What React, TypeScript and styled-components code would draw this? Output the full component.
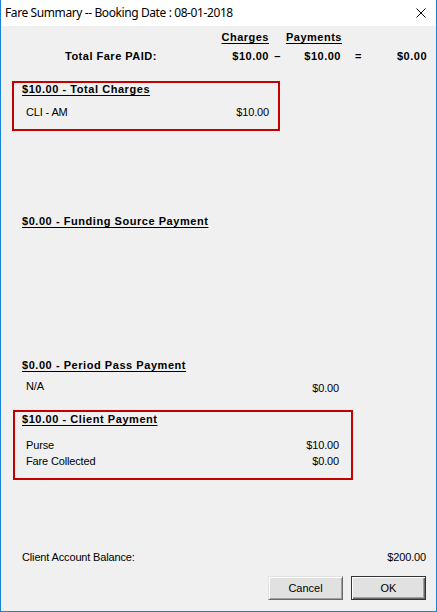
import React from "react";
import styled, { createGlobalStyle } from "styled-components";

const GlobalStyle = createGlobalStyle`
  html, body {
    margin: 0;
    padding: 0;
    background: #f0f0f0;
  }
  * { box-sizing: border-box; }
`;

const Window = styled.div`
  width: 437px;
  height: 612px;
  display: flex;
  flex-direction: column;
  border: 1px solid #1883d7;
  border-top: none;
  background: #f0f0f0;
  font-family: "Liberation Sans", Arial, sans-serif;
  font-size: 11px;
  color: #000;
`;

const TitleBar = styled.div`
  height: 26px;
  flex: none;
  display: flex;
  align-items: center;
  justify-content: space-between;
  padding: 0 10px 0 4px;
  background: #fff;
`;

const TitleText = styled.span`
  font-family: "Noto Sans", "Open Sans", sans-serif;
  font-size: 12px;
  letter-spacing: -0.4px;
  line-height: 26px;
  color: #000;
`;

const CloseGlyph = styled.svg`
  display: block;
  width: 10px;
  height: 10px;
  margin-top: -1px;
`;

const Body = styled.div`
  flex: 1;
  display: flex;
  flex-direction: column;
  align-items: flex-start;
  padding: 5px 9px 0 11px;
`;

const Totals = styled.div`
  margin-left: 53px;
  display: grid;
  grid-template-columns: 150px 54px 17px 55px 35px 51px;
  row-gap: 6px;
  line-height: 13px;
  font-weight: bold;
  letter-spacing: 0.5px;
`;

const Cell = styled.span<{ $align?: "left" | "right" | "center"; $under?: boolean }>`
  text-align: ${(p) => p.$align ?? "left"};
  text-decoration: ${(p) => (p.$under ? "underline" : "none")};
  text-underline-offset: 2px;
  white-space: nowrap;
`;

const Section = styled.div<{
  $top: number;
  $width: number;
  $left?: number;
  $framed?: boolean;
  $padTop?: number;
  $padBottom?: number;
}>`
  margin-top: ${(p) => p.$top}px;
  margin-left: ${(p) => p.$left ?? 0}px;
  width: ${(p) => p.$width}px;
  display: flex;
  flex-direction: column;
  border: ${(p) => (p.$framed ? "2px solid #c40000" : "none")};
  padding-top: ${(p) => p.$padTop ?? 0}px;
  padding-bottom: ${(p) => p.$padBottom ?? 0}px;
`;

const Heading = styled.div<{ $indent: number }>`
  padding-left: ${(p) => p.$indent}px;
  line-height: 13px;
  font-weight: bold;
  letter-spacing: 0.55px;
  text-decoration: underline;
  text-underline-offset: 2px;
  white-space: nowrap;
`;

const Lines = styled.div<{ $top: number; $indent: number; $right: number }>`
  margin-top: ${(p) => p.$top}px;
  padding: 0 ${(p) => p.$right}px 0 ${(p) => p.$indent}px;
  display: flex;
  flex-direction: column;
  gap: 3px;
`;

const Line = styled.div`
  display: flex;
  justify-content: space-between;
  align-items: flex-start;
  line-height: 13px;
  letter-spacing: -0.15px;
`;

const Amount = styled.span<{ $drop?: number }>`
  padding-top: ${(p) => p.$drop ?? 0}px;
`;

const Balance = styled.div`
  margin-top: 71px;
  align-self: stretch;
  display: flex;
  justify-content: space-between;
  padding: 0 1px 0 10px;
  line-height: 13px;
  letter-spacing: -0.15px;
`;

const ButtonRow = styled.div`
  margin-top: 12px;
  align-self: stretch;
  display: flex;
  justify-content: flex-end;
  gap: 8px;
  padding-right: 1px;
`;

const Button = styled.button<{ $default?: boolean }>`
  width: 75px;
  height: 24px;
  padding: 0;
  font-family: "Liberation Sans", Arial, sans-serif;
  font-size: 11px;
  color: #000;
  background: #e1e1e1;
  border: 1px solid ${(p) => (p.$default ? "#333" : "#e3e3e3")};
  border-right-color: ${(p) => (p.$default ? "#333" : "#696969")};
  border-bottom-color: ${(p) => (p.$default ? "#333" : "#696969")};
  box-shadow: ${(p) =>
    p.$default
      ? "inset 1px 1px #fff, inset -1px -1px #696969, inset -2px -2px #a0a0a0"
      : "inset 1px 1px #fff, inset -1px -1px #a0a0a0"};
`;

export default function App() {
  return (
    <>
      <GlobalStyle />
      <Window>
        <TitleBar>
          <TitleText>Fare Summary -- Booking Date : 08-01-2018</TitleText>
          <CloseGlyph viewBox="0 0 10 10">
            <path d="M0.5 0.5 L9.5 9.5 M9.5 0.5 L0.5 9.5" stroke="#000" strokeWidth="1" fill="none" />
          </CloseGlyph>
        </TitleBar>
        <Body>
          <Totals>
            <span />
            <Cell $align="right" $under>Charges</Cell>
            <span />
            <Cell $align="right" $under>Payments</Cell>
            <span />
            <span />
            <Cell>Total Fare PAID:</Cell>
            <Cell $align="right">$10.00</Cell>
            <Cell $align="center">–</Cell>
            <Cell $align="right">$10.00</Cell>
            <Cell $align="center">=</Cell>
            <Cell $align="right">$0.00</Cell>
          </Totals>

          <Section $top={18} $width={268} $framed $padBottom={10}>
            <Heading $indent={8}>$10.00 - Total Charges</Heading>
            <Lines $top={10} $indent={12} $right={9}>
              <Line>
                <span>CLI - AM</span>
                <Amount>$10.00</Amount>
              </Line>
            </Lines>
          </Section>

          <Section $top={84} $width={341}>
            <Heading $indent={10}>$0.00 - Funding Source Payment</Heading>
          </Section>

          <Section $top={131} $width={341}>
            <Heading $indent={10}>$0.00 - Period Pass Payment</Heading>
            <Lines $top={8} $indent={14} $right={14}>
              <Line>
                <span>N/A</span>
                <Amount $drop={2}>$0.00</Amount>
              </Line>
            </Lines>
          </Section>

          <Section $top={15} $left={1} $width={340} $framed $padTop={1} $padBottom={10}>
            <Heading $indent={7}>$10.00 - Client Payment</Heading>
            <Lines $top={13} $indent={11} $right={12}>
              <Line>
                <span>Purse</span>
                <Amount>$10.00</Amount>
              </Line>
              <Line>
                <span>Fare Collected</span>
                <Amount>$0.00</Amount>
              </Line>
            </Lines>
          </Section>

          <Balance>
            <span>Client Account Balance:</span>
            <span>$200.00</span>
          </Balance>

          <ButtonRow>
            <Button>Cancel</Button>
            <Button $default>OK</Button>
          </ButtonRow>
        </Body>
      </Window>
    </>
  );
}
